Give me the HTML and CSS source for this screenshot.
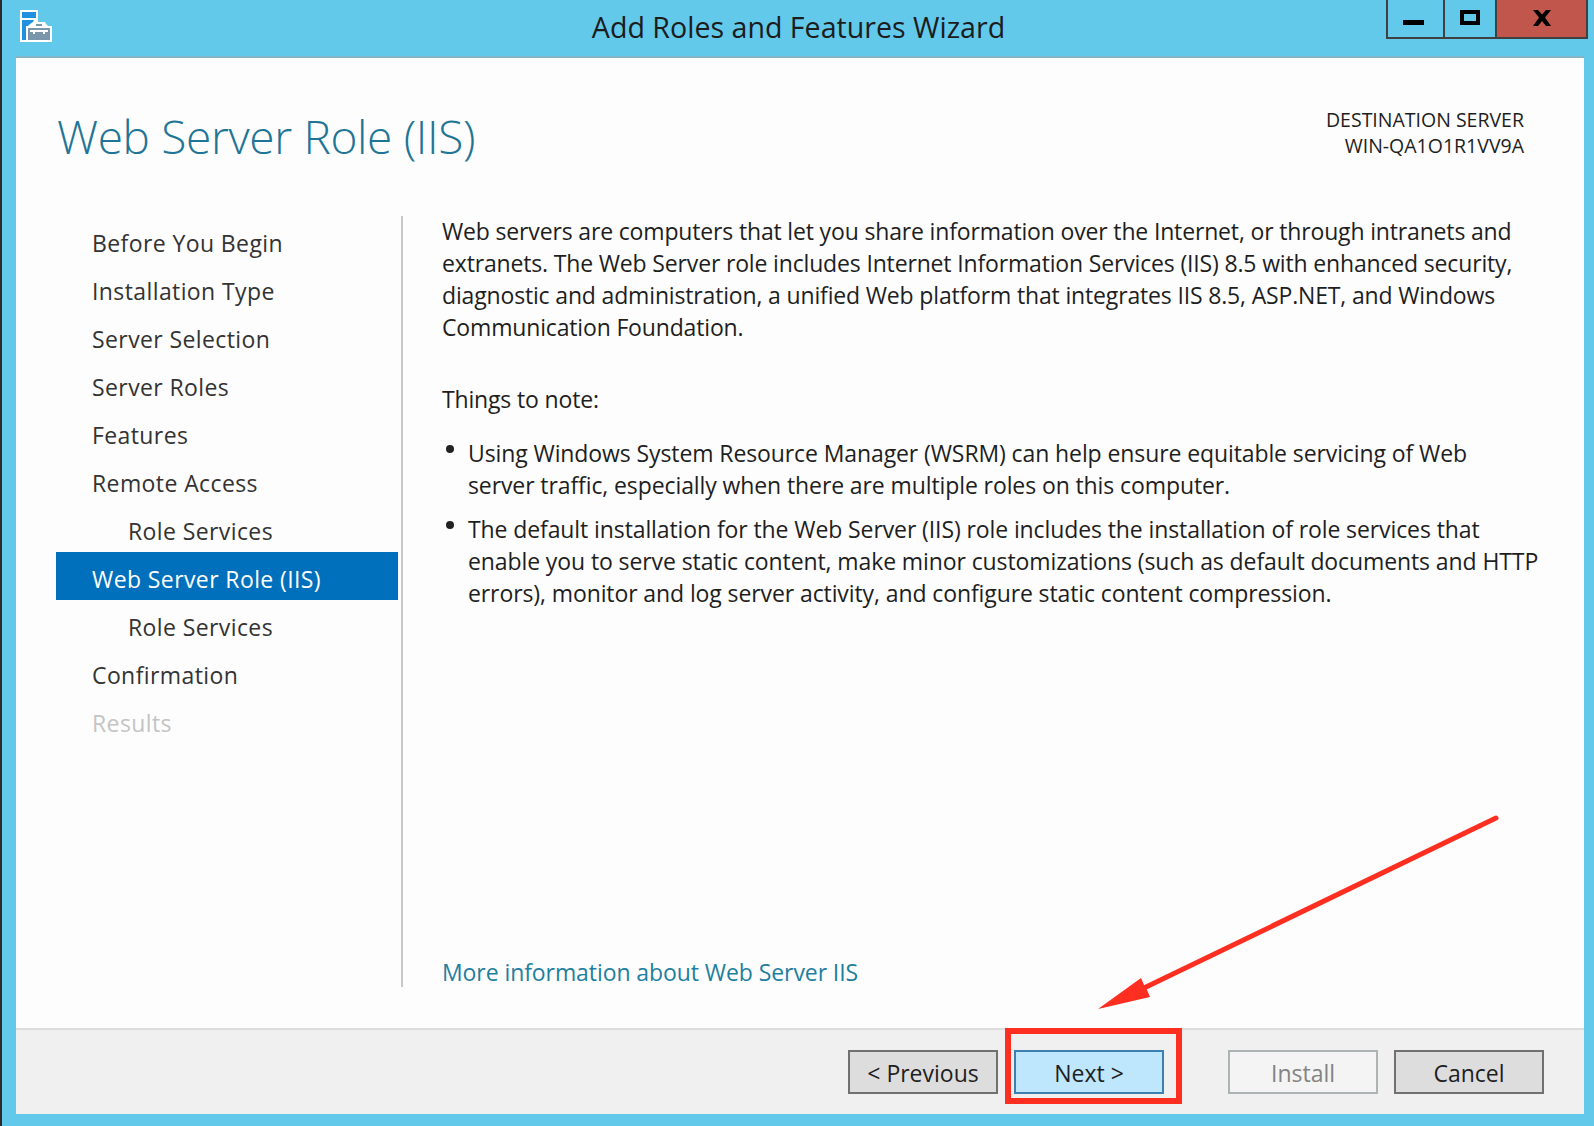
FILE: index.html
```html
<!DOCTYPE html>
<html lang="en">
<head>
<meta charset="utf-8">
<title>Add Roles and Features Wizard</title>
<link rel="stylesheet" href="styles.css">
</head>
<body>
<div class="window">
  <header class="titlebar">
    <svg class="app-icon" width="34" height="34" viewBox="0 0 34 34">
      <path fill="#fff" d="M0 0h18v12h7l1 2 2 2h4v16H0z"/>
      <path fill="#2090e0" d="M2 2h14v6H2zM2 10h12l-1 2-3 2-2 2H6v14H2z"/>
      <path fill="#7a96aa" d="M8 18h22v12H8zM16 14h6v2h-6z"/>
      <path fill="#fff" d="M10 20h18v2h-3v2h-2v-2h-8v2h-2v-2h-3z"/>
    </svg>
    <h1 class="wintitle">Add Roles and Features Wizard</h1>
    <div class="controls">
      <div class="ctl"><span class="ctl-min"></span></div>
      <div class="ctl"><span class="ctl-max"></span></div>
      <div class="ctl ctl-close">
        <svg width="18" height="16" viewBox="0 0 18 16"><path fill="#000" d="M0 0h5l4 4.500L13 0h5l-6 7.500L18 16h-5l-4-5-4 5H0l6-8.500z"/></svg>
      </div>
    </div>
  </header>
  <main class="panel">
    <div class="head">
      <h2 class="pagetitle">Web Server Role (IIS)</h2>
      <div class="dest">DESTINATION SERVER<br>WIN-QA1O1R1VV9A</div>
    </div>
    <div class="body">
      <nav class="steps">
        <div class="step">Before You Begin</div>
        <div class="step">Installation Type</div>
        <div class="step">Server Selection</div>
        <div class="step">Server Roles</div>
        <div class="step">Features</div>
        <div class="step">Remote Access</div>
        <div class="step sub">Role Services</div>
        <div class="step active">Web Server Role (IIS)</div>
        <div class="step sub">Role Services</div>
        <div class="step">Confirmation</div>
        <div class="step off">Results</div>
      </nav>
      <section class="content">
        <div class="text">
          <p class="intro">Web servers are computers that let you share information over the Internet, or through intranets and<br>extranets. The Web Server role includes Internet Information Services (IIS) 8.5 with enhanced security,<br>diagnostic and administration, a unified Web platform that integrates IIS 8.5, ASP.NET, and Windows<br>Communication Foundation.</p>
          <p class="note">Things to note:</p>
          <ul class="list">
            <li>Using Windows System Resource Manager (WSRM) can help ensure equitable servicing of Web<br>server traffic, especially when there are multiple roles on this computer.</li>
            <li>The default installation for the Web Server (IIS) role includes the installation of role services that<br>enable you to serve static content, make minor customizations (such as default documents and HTTP<br>errors), monitor and log server activity, and configure static content compression.</li>
          </ul>
        </div>
        <a class="more" href="#">More information about Web Server IIS</a>
      </section>
    </div>
    <footer class="footer">
      <button class="btn" type="button">&lt; Previous</button>
      <button class="btn next" type="button">Next &gt;</button>
      <button class="btn install" type="button" disabled>Install</button>
      <button class="btn" type="button">Cancel</button>
    </footer>
  </main>
</div>
<div class="callout-box"></div>
<svg class="callout-arrow" width="420" height="210" viewBox="0 0 420 210">
  <path fill="none" stroke="#fe2e20" stroke-width="5" stroke-linecap="round" d="M55 177.500L406 8"/>
  <path fill="#fe2e20" d="M8 199L51 168l3 7 3 5 3 7z"/>
</svg>
</body>
</html>
```
FILE: styles.css
```css
* { box-sizing: border-box; }
html, body { margin: 0; padding: 0; }
body {
  width: 1594px;
  height: 1126px;
  overflow: hidden;
  position: relative;
  background: #63c9ea;
  font-family: "Open Sans", "Noto Sans", sans-serif;
  color: #1e1e1e;
}
.window {
  height: 100%;
  display: flex;
  flex-direction: column;
  border-left: 2px solid #2b2b2b;
  padding: 0 10px 12px 14px;
}
.titlebar {
  height: 58px;
  flex: none;
  display: flex;
  align-items: flex-start;
  position: relative;
  border-bottom: 2px solid #84b4c8;
}
.app-icon { margin: 10px 0 0 4px; flex: none; }
.wintitle {
  margin: 0;
  position: absolute;
  left: 0;
  right: 0;
  top: 8px;
  padding-right: 3px;
  text-align: center;
  font-size: 28.6px;
  font-weight: 400;
  line-height: 38px;
  color: #1c1c1c;
}
.controls {
  position: absolute;
  top: 0;
  right: -4px;
  height: 39px;
  display: flex;
  border: solid #404040;
  border-width: 0 2px 2px 2px;
}
.ctl {
  width: 52px;
  height: 37px;
  border-left: 2px solid #404040;
  display: flex;
  align-items: flex-end;
  justify-content: center;
}
.ctl:first-child { width: 55px; border-left: 0; }
.ctl-close { width: 91px; background: #c0564c; align-items: flex-start; padding-top: 10px; }
.ctl-min { display: block; width: 21px; height: 5px; background: #000; margin: 0 4px 12px 0; }
.ctl-max { display: block; width: 20px; height: 15px; border: 4px solid #000; margin-bottom: 12px; }
.panel {
  flex: 1;
  display: flex;
  flex-direction: column;
  background: #fdfdfd;
  min-height: 0;
}
.head {
  height: 158px;
  flex: none;
  display: flex;
  justify-content: space-between;
  padding: 0 60px 0 41px;
}
.pagetitle {
  margin: 45px 0 0;
  font-size: 46px;
  line-height: 66px;
  letter-spacing: -0.34px;
  font-weight: 300;
  color: #1f7596;
}
.dest {
  margin-top: 49px;
  text-align: right;
  font-size: 19.500px;
  line-height: 26px;
  color: #1e1e1e;
}
.body {
  flex: 1;
  display: flex;
  min-height: 0;
  padding-bottom: 41px;
}
.steps {
  width: 387px;
  padding: 0 3px 0 40px;
  border-right: 2px solid #c8c8c8;
  flex: none;
}
.step {
  height: 48px;
  padding: 3px 0 0 36px;
  line-height: 48px;
  font-size: 23px;
  letter-spacing: 0.4px;
  color: #333;
}
.step.sub { padding-left: 72px; }
.step.active { background: #0070bc; color: #fff; }
.step.off { color: #c4c4c4; }
.content {
  flex: 1;
  display: flex;
  flex-direction: column;
  justify-content: space-between;
  padding-left: 39px;
  font-size: 23px;
  line-height: 32px;
  letter-spacing: -0.16px;
  white-space: nowrap;
}
.text { margin-top: -1px; }
.text p { margin: 0; }
.text .note { margin-top: 40px; }
.list { list-style: none; margin: 22px 0 0; padding: 0 0 0 26px; letter-spacing: -0.1px; }
.list li { position: relative; margin-bottom: 12px; }
.list li::before {
  content: "";
  position: absolute;
  left: -22px;
  top: 8px;
  width: 8px;
  height: 8px;
  border-radius: 50%;
  background: #222;
}
.more { color: #1f7f9f; text-decoration: none; letter-spacing: -0.08px; margin-bottom: -1px; }
.footer {
  height: 86px;
  flex: none;
  background: #f0f0f0;
  border-top: 2px solid #dcdcdc;
  display: flex;
  align-items: flex-start;
  padding: 20px 40px 0 0;
  justify-content: flex-end;
  gap: 16px;
}
.btn {
  width: 150px;
  height: 44px;
  background: #dddddd;
  border: 2px solid #707070;
  font: inherit;
  font-size: 23px;
  line-height: 40px;
  padding: 1px 0 0;
  color: #1e1e1e;
}
.next { background: #bee6fd; border-color: #3c7fb1; margin-right: 48px; }
.install { background: #f4f4f4; border-color: #adb2b5; color: #838383; }
.callout-box {
  position: absolute;
  left: 1005px;
  top: 1028px;
  width: 177px;
  height: 76px;
  border: 6px solid #fe2e20;
}
.callout-arrow {
  position: absolute;
  left: 1090px;
  top: 810px;
}
```
